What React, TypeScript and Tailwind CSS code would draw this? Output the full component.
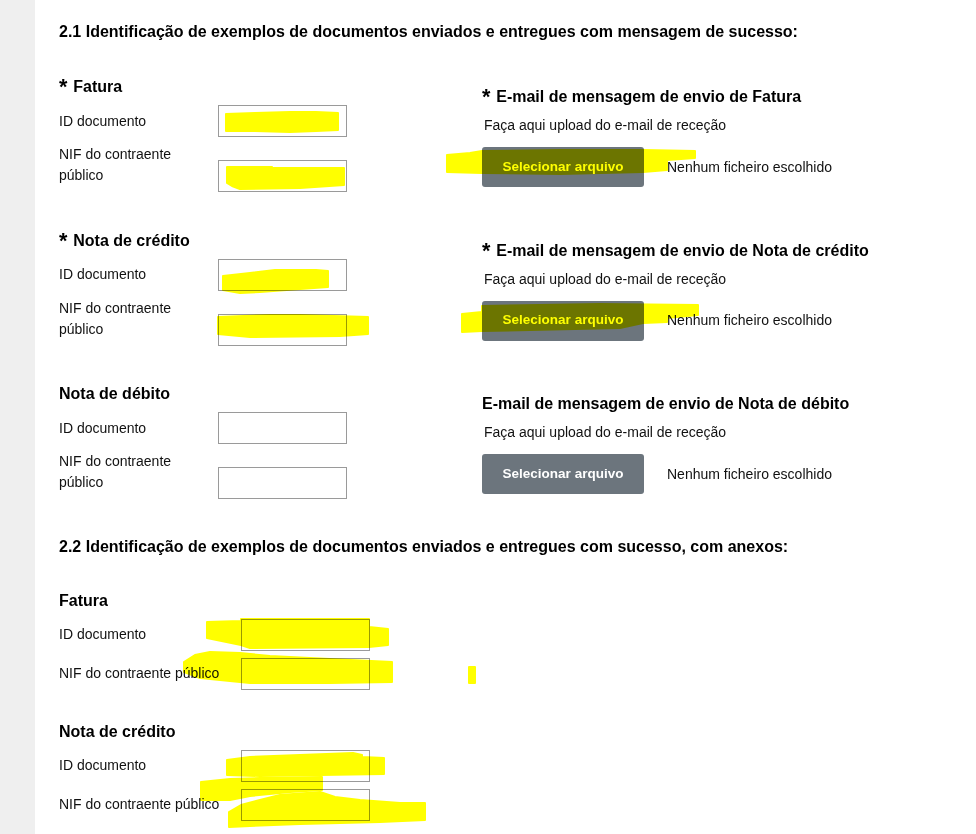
import React from "react";

function Field() {
  return <input type="text" className="w-[129px] h-[32px] shrink-0 border border-[#9a9a9a] bg-white outline-none" />;
}

function Star() {
  return <span className="inline-block origin-left scale-[1.35]">*</span>;
}

function Block({ title, req }: { title: string; req?: boolean }) {
  return (
    <div className="flex">
      <div className="w-[423px] shrink-0">
        <h3 className="h-[20px] text-[16px] leading-[20px] font-bold text-black">
          {req && <Star />}
          <span className={req ? "ml-[8px]" : ""}>{title}</span>
        </h3>
        <div className="mt-[8px] flex h-[32px] items-center">
          <label className="w-[159px] shrink-0 text-[14px] leading-[21px]">ID documento</label>
          <Field />
        </div>
        <div className="mt-[7px] flex items-start">
          <label className="w-[159px] shrink-0 text-[14px] leading-[21px]">
            NIF do contraente
            <br />
            público
          </label>
          <div className="mt-[16px]">
            <Field />
          </div>
        </div>
      </div>
      <div className="pt-[10px]">
        <h3 className="h-[20px] text-[16px] leading-[20px] font-bold text-black">
          {req && <Star />}
          <span className={req ? "ml-[8px]" : ""}>E-mail de mensagem de envio de {title}</span>
        </h3>
        <p className="mt-[8px] pl-[2px] text-[14px] leading-[21px]">Faça aqui upload do e-mail de receção</p>
        <div className="mt-[11px] flex items-center">
          <button className="h-[40px] w-[162px] rounded-[3px] bg-[#6c757d] font-['Liberation_Sans',Arial,sans-serif] text-[13.5px] font-bold text-white">
            Selecionar arquivo
          </button>
          <span className="ml-[23px] text-[14px] leading-[21px]">Nenhum ficheiro escolhido</span>
        </div>
      </div>
    </div>
  );
}

function SimpleBlock({ title }: { title: string }) {
  return (
    <div>
      <h3 className="h-[20px] text-[16px] leading-[20px] font-bold text-black">{title}</h3>
      <div className="mt-[8px] flex h-[32px] items-center">
        <label className="w-[182px] shrink-0 text-[14px] leading-[21px]">ID documento</label>
        <Field />
      </div>
      <div className="mt-[7px] flex h-[32px] items-center">
        <label className="w-[182px] shrink-0 text-[14px] leading-[21px]">NIF do contraente público</label>
        <Field />
      </div>
    </div>
  );
}

const marks: string[] = [
  "226,114 255,113 290,112 316,112 338,113 338,130 316,131 290,132 255,131 226,131",
  "227,167 272,167 272,168 344,168 344,185 300,188 240,189 232,186 227,183",
  "447,155 470,153 482,151 560,150 643,150 695,151 695,158 667,160 667,170 643,172 560,174 482,173 447,172",
  "223,276 250,273 275,270 316,270 328,271 328,287 300,289 260,292 240,293 223,290",
  "218,317 270,315 300,315 368,317 368,334 340,336 250,337 218,334",
  "462,314 482,312 482,306 600,304 698,305 698,315 667,318 667,322 643,323 620,328 482,331 462,332",
  "207,622 241,621 241,619 369,619 369,627 388,629 388,645 369,647 250,648 241,645 207,638",
  "184,662 195,655 210,652 240,653 270,656 330,659 392,662 392,682 330,683 250,683 230,681 200,678 184,672",
  "469,667 475,667 475,683 469,683",
  "227,760 250,757 300,755 353,753 362,755 362,757 384,758 384,774 320,775 260,776 227,775",
  "201,782 230,779 260,778 322,777 322,790 290,792 250,796 230,800 201,800",
  "229,812 241,805 260,800 280,795 320,792 335,797 360,800 400,803 425,803 425,820 380,822 300,824 250,826 229,827",
];

export default function App() {
  return (
    <div className="relative flex h-[834px] w-[976px] overflow-hidden bg-white font-['Liberation_Sans',Arial,sans-serif] text-[#111]">
      <div className="w-[35px] shrink-0 bg-[#efefef]" />
      <div className="flex-1 pl-[24px] pt-[22px]">
        <h2 className="text-[16px] leading-[20px] font-bold text-black">
          2.1 Identificação de exemplos de documentos enviados e entregues com mensagem de sucesso:
        </h2>
        <div className="mt-[35px] flex flex-col gap-[38.5px]">
          <Block title="Fatura" req />
          <Block title="Nota de crédito" req />
          <Block title="Nota de débito" />
        </div>
        <h2 className="mt-[37.5px] text-[16px] leading-[20px] font-bold text-black">
          2.2 Identificação de exemplos de documentos enviados e entregues com sucesso, com anexos:
        </h2>
        <div className="mt-[34px] flex flex-col gap-[32px]">
          <SimpleBlock title="Fatura" />
          <SimpleBlock title="Nota de crédito" />
        </div>
      </div>
      <svg
        className="pointer-events-none absolute left-0 top-0 mix-blend-multiply"
        width="976"
        height="834"
        viewBox="0 0 976 834"
      >
        {marks.map((p, i) => (
          <polygon key={i} points={p} fill="#ffff00" strokeLinejoin="round" stroke="#ffff00" strokeWidth="2" />
        ))}
      </svg>
    </div>
  );
}
